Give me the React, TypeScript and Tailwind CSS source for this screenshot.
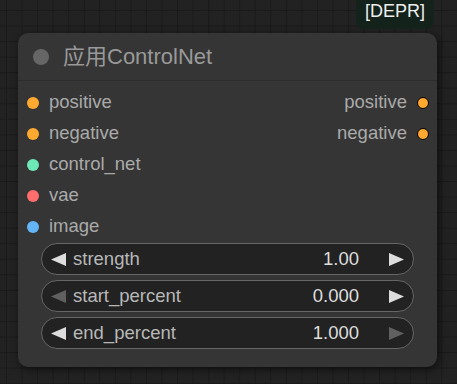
const font = "font-['Liberation_Sans','Arial','Noto_Sans_CJK_SC',sans-serif]";

type Slot = { name: string; color: string; output?: boolean };

const inputs: Slot[] = [
  { name: "positive", color: "bg-[#ffa931]", output: true },
  { name: "negative", color: "bg-[#ffa931]", output: true },
  { name: "control_net", color: "bg-[#6ee7b7]" },
  { name: "vae", color: "bg-[#ff6e6e]" },
  { name: "image", color: "bg-[#64b5f6]" },
];

const widgets = [
  { label: "strength", value: "1.00", left: true, right: true },
  { label: "start_percent", value: "0.000", left: false, right: true },
  { label: "end_percent", value: "1.000", left: true, right: false },
];

const Arrow = ({ dir, on }: { dir: "l" | "r"; on: boolean }) => (
  <svg width="15" height="13" viewBox="0 0 15 13" className="shrink-0">
    <path
      d={dir === "l" ? "M15 0 L0 6.5 L15 13 Z" : "M0 0 L15 6.5 L0 13 Z"}
      fill={on ? "#dddddd" : "#606060"}
    />
  </svg>
);

export default function App() {
  return (
    <div
      className={`relative w-[457px] h-[384px] overflow-hidden bg-[#222222] bg-[linear-gradient(#1a1a1a_1px,transparent_1px),linear-gradient(90deg,#1a1a1a_1px,transparent_1px)] bg-size-[15.55px_15.55px] bg-position-[6px_10px] pl-[18px] pt-[33px] ${font}`}
    >
      {/* deprecated badge */}
      <div className="absolute left-[356px] top-[-8px] w-[78px] h-[37px] rounded-[8px] bg-[#13221a] flex items-end justify-center pb-[4px] text-[18px] text-[#eeeeee]">
        [DEPR]
      </div>

      <div className="w-[419px] h-[334px] rounded-[10px] bg-[#353535] shadow-[2px_2px_8px_rgba(0,0,0,0.6)] flex flex-col">
        {/* title */}
        <div className="h-[48px] flex items-center pl-[15px] gap-[14px] border-b border-[#2c2c2c]">
          <span className="w-[16px] h-[16px] rounded-full bg-[#666666]" />
          <span className="text-[22px] text-[#999999] leading-none">应用ControlNet</span>
        </div>

        {/* slots */}
        <div className="pt-[6px] flex flex-col">
          {inputs.map((s) => (
            <div key={s.name} className="h-[31px] flex items-center justify-between pl-[9px] pr-[8px]">
              <div className="flex items-center gap-[10px]">
                <span className={`w-[12px] h-[12px] rounded-full ${s.color}`} />
                <span className="text-[18.5px] text-[#aaaaaa] leading-none">{s.name}</span>
              </div>
              {s.output && (
                <div className="flex items-center gap-[10px]">
                  <span className="text-[18.5px] text-[#aaaaaa] leading-none">{s.name}</span>
                  <span className="w-[12px] h-[12px] rounded-full bg-[#ffa931] border border-black" />
                </div>
              )}
            </div>
          ))}
        </div>

        {/* widgets */}
        <div className="mt-[1px] px-[23px] flex flex-col gap-[5px]">
          {widgets.map((w) => (
            <div
              key={w.label}
              className="h-[32px] rounded-full border border-[#666666] bg-[#222222] flex items-center pl-[9px] pr-[9px]"
            >
              <Arrow dir="l" on={w.left} />
              <span className="ml-[7px] text-[18.5px] text-[#b8b8b8] leading-none">{w.label}</span>
              <span className="ml-auto text-[18.5px] text-[#dddddd] leading-none">{w.value}</span>
              <span className="ml-[30px]">
                <Arrow dir="r" on={w.right} />
              </span>
            </div>
          ))}
        </div>
      </div>
    </div>
  );
}
